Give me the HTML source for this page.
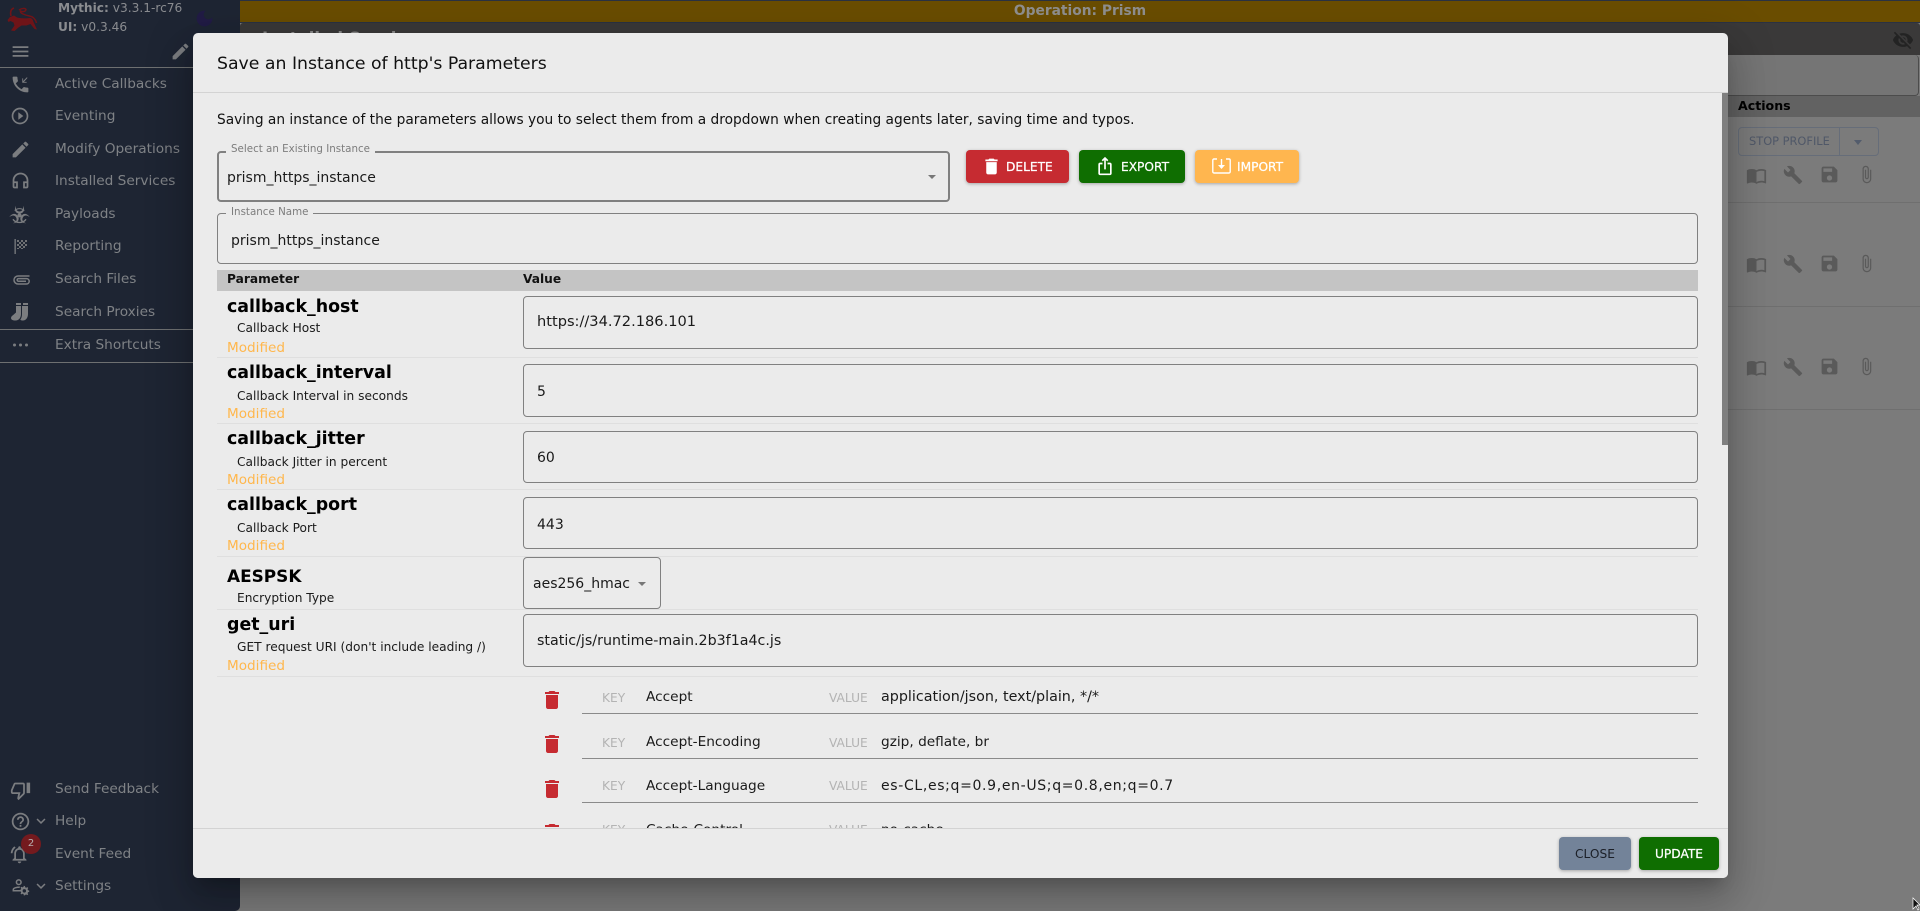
<!DOCTYPE html>
<html><head><meta charset="utf-8"><title>Mythic</title>
<style>
*{box-sizing:border-box}
html,body{margin:0;padding:0;width:1920px;height:911px;overflow:hidden;background:#7b7b7b;font-family:"DejaVu Sans","Liberation Sans",sans-serif}
.a{position:absolute;white-space:nowrap}
.t{position:absolute;white-space:nowrap;height:20px;line-height:20px}
svg{position:absolute;display:block}
#side{position:absolute;left:0;top:0;width:240px;height:911px;background:#1e2533;border-radius:0 0 5px 0}
.nav{position:absolute;left:55px;font-size:13.7px;color:#7f8286;height:20px;line-height:20px;white-space:nowrap}
.hr{position:absolute;left:0;width:240px;height:1px;background:#6e7071}
.i{fill:#7b7d80}
#modal{position:absolute;left:193px;top:33px;width:1535px;height:845px;background:#ebebeb;border-radius:5px;box-shadow:0 11px 15px -7px rgba(0,0,0,.2),0 24px 38px 3px rgba(0,0,0,.14),0 9px 46px 8px rgba(0,0,0,.12);overflow:hidden;color:#111}
.box{position:absolute;border:1px solid #808080;border-radius:4px}
.lbl{position:absolute;background:#ebebeb;padding:0 5px;font-size:10.3px;color:#7d7d7d;line-height:12px;height:12px}
.name{position:absolute;left:34px;font-size:17.4px;font-weight:700;color:#000;height:20px;line-height:20px;white-space:nowrap;transform:translateY(1px)}
.sub{position:absolute;left:44px;font-size:12.2px;color:#1a1a1a;height:16px;line-height:16px;white-space:nowrap;transform:translateY(1px)}
.mod{position:absolute;left:34px;font-size:13.6px;color:#ffb74d;height:20px;line-height:20px;white-space:nowrap;transform:translateY(1px)}
.sep{position:absolute;left:24px;width:1481px;height:1px;background:#dfdfdf}
.val{position:absolute;left:344px;font-size:14px;color:#1a1a1a;height:20px;line-height:20px;white-space:nowrap;transform:translateY(1px)}
.btn{position:absolute;height:33px;border-radius:4px;color:#fff;font-size:12.2px;line-height:34px;box-shadow:0 1px 3px rgba(0,0,0,.3);white-space:nowrap;-webkit-text-stroke:.25px currentColor}
.k{position:absolute;font-size:12.2px;color:#b3b3b3;height:18px;line-height:18px}
.kv{position:absolute;font-size:13.7px;color:#1a1a1a;height:20px;line-height:20px;white-space:nowrap;transform:translateY(1px)}
.ul{position:absolute;left:389px;width:1116px;height:1px;background:#8a8a8a}
.act{fill:#5a5a5a}
</style></head><body>

<!-- main background -->
<div class="a" style="left:240px;top:0;width:1680px;height:911px;background:#7b7b7b"></div>
<div class="a" style="left:240px;top:1px;width:1680px;height:21px;background:#6a4d00;color:#8f8f8f;font-size:13.8px;font-weight:700;text-align:center;line-height:21px">Operation: Prism</div>
<div class="a" style="left:240px;top:0;width:1680px;height:1px;background:#2a3242"></div>
<div class="a" style="left:240px;top:22px;width:1680px;height:1px;background:#2a3242"></div>
<div class="a" style="left:240px;top:23px;width:1680px;height:32px;background:#3a3939;border-radius:3px 3px 0 0"></div>
<div class="a" style="left:262px;top:29px;color:#8a8a8a;font-size:16.5px;font-weight:700">Installed Services</div>
<svg style="left:1892px;top:29px" width="22" height="22" viewBox="0 0 24 24" fill="#232323"><path d="M12 7c2.76 0 5 2.24 5 5 0 .65-.13 1.26-.36 1.83l2.92 2.92c1.51-1.26 2.7-2.89 3.43-4.75-1.73-4.39-6-7.5-11-7.5-1.4 0-2.74.25-3.98.7l2.16 2.16C10.74 7.13 11.35 7 12 7zM2 4.27l2.28 2.28.46.46C3.08 8.3 1.78 10.02 1 12c1.73 4.39 6 7.5 11 7.5 1.55 0 3.03-.3 4.38-.84l.42.42L19.73 22 21 20.73 3.27 3 2 4.27zM7.53 9.8l1.55 1.55c-.05.21-.08.43-.08.65 0 1.66 1.34 3 3 3 .22 0 .44-.03.65-.08l1.55 1.55c-.67.33-1.41.53-2.2.53-2.76 0-5-2.24-5-5 0-.79.2-1.53.53-2.2zm4.31-.78 3.15 3.15.02-.16c0-1.66-1.34-3-3-3l-.17.01z"/></svg>
<div class="a" style="left:1700px;top:55px;width:219px;height:41px;background:#757575;border:1px solid #4c4c4c;border-left:0;border-top-width:0;border-radius:0 4px 4px 0"></div>
<div class="a" style="left:1700px;top:96px;width:220px;height:21px;background:#626262"></div>
<div class="a" style="left:1738px;top:95px;height:21px;line-height:21px;font-size:12.6px;font-weight:700;color:#000">Actions</div>
<div class="a" style="left:1738px;top:127px;width:141px;height:29px;border:1px solid #666d79;border-radius:4px;color:#505868;font-size:11.4px;line-height:27px;padding-left:10px">STOP PROFILE</div>
<div class="a" style="left:1839px;top:127px;width:1px;height:29px;background:#666d79"></div>
<div class="a" style="left:1854px;top:140px;width:0;height:0;border-left:4.5px solid transparent;border-right:4.5px solid transparent;border-top:5px solid #535c6c"></div>
<div class="a" style="left:1728px;top:202px;width:192px;height:1px;background:#6f6f6f"></div>
<div class="a" style="left:1728px;top:306px;width:192px;height:1px;background:#6f6f6f"></div>
<div class="a" style="left:1728px;top:409px;width:192px;height:1px;background:#6f6f6f"></div>
<!-- action icons rows -->
<svg style="left:1746px;top:165px" width="21" height="21" viewBox="0 0 24 24" class="act"><path d="M21 5c-1.11-.35-2.33-.5-3.5-.5-1.95 0-4.05.4-5.5 1.5-1.45-1.1-3.55-1.5-5.5-1.5S2.45 4.9 1 6v14.65c0 .25.25.5.5.5.1 0 .15-.05.25-.05C3.1 20.45 5.05 20 6.5 20c1.95 0 4.05.4 5.5 1.5 1.35-.85 3.8-1.5 5.5-1.5 1.65 0 3.35.3 4.75 1.05.1.05.15.05.25.05.25 0 .5-.25.5-.5V6c-.6-.45-1.25-.75-2-1zm0 13.5c-1.1-.35-2.3-.5-3.5-.5-1.7 0-4.15.65-5.5 1.5V8c1.35-.85 3.8-1.5 5.5-1.5 1.2 0 2.4.15 3.5.5v11.5z"/></svg>
<svg style="left:1783px;top:165px" width="20" height="20" viewBox="0 0 24 24" class="act"><path d="M22.7 19l-9.1-9.1c.9-2.3.4-5-1.5-6.9-2-2-5-2.4-7.4-1.3L9 6 6 9 1.6 4.7C.4 7.1.9 10.1 2.9 12.1c1.9 1.9 4.6 2.4 6.9 1.5l9.1 9.1c.4.4 1 .4 1.4 0l2.3-2.3c.5-.4.5-1.1.1-1.4z"/></svg>
<svg style="left:1819px;top:164px" width="21" height="21" viewBox="0 0 24 24" class="act"><path d="M17 3H5c-1.11 0-2 .9-2 2v14c0 1.1.89 2 2 2h14c1.1 0 2-.9 2-2V7l-4-4zm-5 16c-1.66 0-3-1.34-3-3s1.34-3 3-3 3 1.34 3 3-1.34 3-3 3zm3-10H5V5h10v4z"/></svg>
<svg style="left:1857px;top:165px" width="19" height="19" viewBox="0 0 24 24" class="act"><path d="M16.5 6v11.5c0 2.21-1.79 4-4 4s-4-1.79-4-4V5c0-1.38 1.12-2.5 2.5-2.5s2.5 1.12 2.5 2.5v10.5c0 .55-.45 1-1 1s-1-.45-1-1V6H10v9.5c0 1.38 1.12 2.5 2.5 2.5s2.5-1.12 2.5-2.5V5c0-2.21-1.79-4-4-4S7 2.79 7 5v12.5c0 3.04 2.46 5.5 5.5 5.5s5.5-2.46 5.5-5.5V6h-1.5z"/></svg>
<svg style="left:1746px;top:254px" width="21" height="21" viewBox="0 0 24 24" class="act"><path d="M21 5c-1.11-.35-2.33-.5-3.5-.5-1.95 0-4.05.4-5.5 1.5-1.45-1.1-3.55-1.5-5.5-1.5S2.45 4.9 1 6v14.65c0 .25.25.5.5.5.1 0 .15-.05.25-.05C3.1 20.45 5.05 20 6.5 20c1.95 0 4.05.4 5.5 1.5 1.35-.85 3.8-1.5 5.5-1.5 1.65 0 3.35.3 4.75 1.05.1.05.15.05.25.05.25 0 .5-.25.5-.5V6c-.6-.45-1.25-.75-2-1zm0 13.5c-1.1-.35-2.3-.5-3.5-.5-1.7 0-4.15.65-5.5 1.5V8c1.35-.85 3.8-1.5 5.5-1.5 1.2 0 2.4.15 3.5.5v11.5z"/></svg>
<svg style="left:1783px;top:254px" width="20" height="20" viewBox="0 0 24 24" class="act"><path d="M22.7 19l-9.1-9.1c.9-2.3.4-5-1.5-6.9-2-2-5-2.4-7.4-1.3L9 6 6 9 1.6 4.7C.4 7.1.9 10.1 2.9 12.1c1.9 1.9 4.6 2.4 6.9 1.5l9.1 9.1c.4.4 1 .4 1.4 0l2.3-2.3c.5-.4.5-1.1.1-1.4z"/></svg>
<svg style="left:1819px;top:253px" width="21" height="21" viewBox="0 0 24 24" class="act"><path d="M17 3H5c-1.11 0-2 .9-2 2v14c0 1.1.89 2 2 2h14c1.1 0 2-.9 2-2V7l-4-4zm-5 16c-1.66 0-3-1.34-3-3s1.34-3 3-3 3 1.34 3 3-1.34 3-3 3zm3-10H5V5h10v4z"/></svg>
<svg style="left:1857px;top:254px" width="19" height="19" viewBox="0 0 24 24" class="act"><path d="M16.5 6v11.5c0 2.21-1.79 4-4 4s-4-1.79-4-4V5c0-1.38 1.12-2.5 2.5-2.5s2.5 1.12 2.5 2.5v10.5c0 .55-.45 1-1 1s-1-.45-1-1V6H10v9.5c0 1.38 1.12 2.5 2.5 2.5s2.5-1.12 2.5-2.5V5c0-2.21-1.79-4-4-4S7 2.79 7 5v12.5c0 3.04 2.46 5.5 5.5 5.5s5.5-2.46 5.5-5.5V6h-1.5z"/></svg>
<svg style="left:1746px;top:357px" width="21" height="21" viewBox="0 0 24 24" class="act"><path d="M21 5c-1.11-.35-2.33-.5-3.5-.5-1.95 0-4.05.4-5.5 1.5-1.45-1.1-3.55-1.5-5.5-1.5S2.45 4.9 1 6v14.65c0 .25.25.5.5.5.1 0 .15-.05.25-.05C3.1 20.45 5.05 20 6.5 20c1.95 0 4.05.4 5.5 1.5 1.35-.85 3.8-1.5 5.5-1.5 1.65 0 3.35.3 4.75 1.05.1.05.15.05.25.05.25 0 .5-.25.5-.5V6c-.6-.45-1.25-.75-2-1zm0 13.5c-1.1-.35-2.3-.5-3.5-.5-1.7 0-4.15.65-5.5 1.5V8c1.35-.85 3.8-1.5 5.5-1.5 1.2 0 2.4.15 3.5.5v11.5z"/></svg>
<svg style="left:1783px;top:357px" width="20" height="20" viewBox="0 0 24 24" class="act"><path d="M22.7 19l-9.1-9.1c.9-2.3.4-5-1.5-6.9-2-2-5-2.4-7.4-1.3L9 6 6 9 1.6 4.7C.4 7.1.9 10.1 2.9 12.1c1.9 1.9 4.6 2.4 6.9 1.5l9.1 9.1c.4.4 1 .4 1.4 0l2.3-2.3c.5-.4.5-1.1.1-1.4z"/></svg>
<svg style="left:1819px;top:356px" width="21" height="21" viewBox="0 0 24 24" class="act"><path d="M17 3H5c-1.11 0-2 .9-2 2v14c0 1.1.89 2 2 2h14c1.1 0 2-.9 2-2V7l-4-4zm-5 16c-1.66 0-3-1.34-3-3s1.34-3 3-3 3 1.34 3 3-1.34 3-3 3zm3-10H5V5h10v4z"/></svg>
<svg style="left:1857px;top:357px" width="19" height="19" viewBox="0 0 24 24" class="act"><path d="M16.5 6v11.5c0 2.21-1.79 4-4 4s-4-1.79-4-4V5c0-1.38 1.12-2.5 2.5-2.5s2.5 1.12 2.5 2.5v10.5c0 .55-.45 1-1 1s-1-.45-1-1V6H10v9.5c0 1.38 1.12 2.5 2.5 2.5s2.5-1.12 2.5-2.5V5c0-2.21-1.79-4-4-4S7 2.79 7 5v12.5c0 3.04 2.46 5.5 5.5 5.5s5.5-2.46 5.5-5.5V6h-1.5z"/></svg>
<svg style="left:1912px;top:897px" width="8" height="14" viewBox="0 0 8 14"><path d="M1 1v11l3-3 2 4 1-1-2-4h3z" fill="#111" stroke="#fff" stroke-width=".7"/></svg>

<!-- sidebar -->
<div id="side">
<svg style="left:6px;top:7px" width="33" height="26" viewBox="0 0 33 26" fill="none" stroke="#6f1418"><path d="M8 1C5 2 4 5 5 9" stroke-width="1.5"/><path d="M13 3c3-2 6-2 7-.5-.5 2.500-4 2.500-5.500 1.500-1 2 4 4 9 5 4 .8 6 3 7 7" stroke-width="1.500"/><path d="M4 10l4-1.500 3 2c4 1 9 1 13 .5 2 0 3 2 3.500 4l2.500 5.500 1 2-2.500-.5-4-5-4 1.500-5 0-3 2-4 3.500-3.500-.5 3.500-5-1-3-3-1.500-2 1-1-2z" fill="#6f1418" stroke="none"/></svg>
<div class="t" style="left:58px;top:-2px;font-size:12.2px;color:#8a8c90"><b>Mythic:</b> v3.3.1-rc76</div>
<div class="t" style="left:58px;top:17px;font-size:12.2px;color:#8a8c90"><b>UI:</b> v0.3.46</div>
<svg style="left:194px;top:8px" width="21" height="21" viewBox="0 0 24 24" fill="#211b45"><path d="M12 3c-4.970 0-9 4.030-9 9s4.030 9 9 9 9-4.030 9-9c0-.46-.04-.92-.1-1.360-.98 1.370-2.580 2.260-4.400 2.260-2.980 0-5.400-2.420-5.400-5.400 0-1.810.89-3.420 2.260-4.400-.44-.06-.9-.1-1.360-.1z"/></svg>
<svg style="left:10px;top:41px" width="21" height="21" viewBox="0 0 24 24" class="i"><path d="M3 18h18v-2H3v2zm0-5h18v-2H3v2zm0-7v2h18V6H3z"/></svg>
<svg style="left:170px;top:41px" width="21" height="21" viewBox="0 0 24 24" class="i"><path d="M3 17.25V21h3.75L17.81 9.94l-3.75-3.75L3 17.25zM20.71 7.04c.39-.39.39-1.02 0-1.41l-2.34-2.34a.9959.9959 0 0 0-1.41 0l-1.83 1.83 3.75 3.75 1.83-1.83z"/></svg>
<div class="hr" style="top:67px"></div>

<svg style="left:10px;top:74px" width="21" height="21" viewBox="0 0 24 24" class="i"><path d="M20 15.500c-1.250 0-2.450-.2-3.570-.57-.35-.11-.74-.03-1.020.24l-2.200 2.200c-2.830-1.440-5.150-3.750-6.590-6.590l2.200-2.210c.28-.26.36-.65.25-1C8.700 6.450 8.500 5.250 8.500 4c0-.55-.45-1-1-1H4c-.55 0-1 .45-1 1 0 9.390 7.610 17 17 17 .55 0 1-.45 1-1v-3.500c0-.55-.45-1-1-1zM20 4.400 19.300 3.700 15 8V5h-1v5h5V9h-3z"/></svg>
<div class="nav" style="top:74px">Active Callbacks</div>
<svg style="left:10px;top:106px" width="20" height="20" viewBox="0 0 24 24" class="i"><path d="M10 16.500l6-4.500-6-4.500v9zM12 2C6.480 2 2 6.480 2 12s4.480 10 10 10 10-4.480 10-10S17.520 2 12 2zm0 18c-4.410 0-8-3.590-8-8s3.590-8 8-8 8 3.590 8 8-3.590 8-8 8z"/></svg>
<div class="nav" style="top:106px">Eventing</div>
<svg style="left:10px;top:139px" width="21" height="21" viewBox="0 0 24 24" class="i"><path d="M3 17.250V21h3.750L17.810 9.940l-3.750-3.750L3 17.250zM20.710 7.040c.39-.39.39-1.020 0-1.410l-2.340-2.340a.9959.9959 0 0 0-1.410 0l-1.830 1.830 3.750 3.750 1.830-1.830z"/></svg>
<div class="nav" style="top:139px">Modify Operations</div>
<svg style="left:10px;top:170px" width="21" height="21" viewBox="0 0 24 24" class="i"><path d="M12 3a9 9 0 0 0-9 9v7c0 1.100.9 2 2 2h4v-8H5v-1c0-3.870 3.130-7 7-7s7 3.130 7 7v1h-4v8h4c1.100 0 2-.9 2-2v-7a9 9 0 0 0-9-9zM7 15v4H5v-4h2zm12 4h-2v-4h2v4z"/></svg>
<div class="nav" style="top:171px">Installed Services</div>
<svg style="left:9px;top:204px" width="21" height="21" viewBox="0 0 24 24" class="i"><circle cx="12" cy="13" r="2.300"/><g id="bz"><path d="M8 2C5.500 6 7 11 12 11c5 0 6.500-5 4-9 .8 4-1 6.500-4 6.500S7.200 6 8 2z"/></g><path d="M8 2C5.500 6 7 11 12 11c5 0 6.500-5 4-9 .8 4-1 6.500-4 6.500S7.200 6 8 2z" transform="rotate(120 12 13)"/><path d="M8 2C5.500 6 7 11 12 11c5 0 6.500-5 4-9 .8 4-1 6.500-4 6.500S7.200 6 8 2z" transform="rotate(240 12 13)"/><path d="M4.500 17.500a9.500 9.500 0 0 0 15 0" fill="none" stroke="#7b7d80" stroke-width="1.500"/><path d="M6.500 7.500a8 8 0 0 1 11 0" fill="none" stroke="#7b7d80" stroke-width="1.200"/></svg>
<div class="nav" style="top:204px">Payloads</div>
<svg style="left:14px;top:239px" width="14" height="15" viewBox="0 0 14 15" fill="#6f7174"><rect x=".5" y="0" width="1.300" height="15" fill="#7b7d80"/><path d="M3 1h2v2H3zM7 1h2v2H7zM11 1h2v2h-2zM5 3h2v2H5zM9 3h2v2H9zM3 5h2v2H3zM7 5h2v2H7zM11 5h2v2h-2zM5 7h2v2H5zM9 7h2v2H9zM3 9h2v1H3zM7 9h2v1H7z"/></svg>
<div class="nav" style="top:236px">Reporting</div>
<svg style="left:12px;top:274px" width="18" height="11" viewBox="0 0 18 11" fill="none" stroke="#7b7d80" stroke-width="1.500"><path d="M17.500 2H6a4 4 0 0 0 0 8h8.500a2.700 2.700 0 0 0 0-5.400H6.500a1.300 1.300 0 0 0 0 2.700H14"/></svg>
<div class="nav" style="top:269px">Search Files</div>
<svg style="left:10px;top:303px" width="18" height="18" viewBox="0 0 18 18" class="i"><path d="M6 0h5v2H6zM6 3h5v8c0 3.500-2 6.500-5.500 6.500C2.500 17.500 1 16.500 1 15c0-1 .8-2 2.500-3.200L6 9.500zM13 0h5v2h-5zM13 3h5v8c0 3.500-2 6.500-5 6.500-1.200 0-2-.3-2.700-.8 1-1.300 1.700-3 1.700-5.700V3z"/></svg>
<div class="nav" style="top:302px">Search Proxies</div>
<div class="hr" style="top:329px"></div>
<svg style="left:12px;top:340px" width="17" height="10" viewBox="0 0 17 10" fill="#7b7d80"><circle cx="2.500" cy="5" r="1.500"/><circle cx="8.500" cy="5" r="1.500"/><circle cx="14.500" cy="5" r="1.500"/></svg>
<div class="nav" style="top:335px">Extra Shortcuts</div>
<div class="hr" style="top:362px"></div>

<svg style="left:10px;top:780px" width="21" height="21" viewBox="0 0 24 24" class="i"><path d="M15 3H6c-.83 0-1.540.5-1.840 1.220l-3.020 7.050c-.09.23-.14.47-.14.730v2c0 1.100.9 2 2 2h6.310l-.95 4.570-.03.32c0 .41.17.79.44 1.060L9.830 23l6.590-6.590c.36-.36.58-.86.58-1.410V5c0-1.100-.9-2-2-2zm0 12l-4.340 4.340L12 14H3v-2l3-7h9v10zm4-12h4v12h-4z"/></svg>
<div class="nav" style="top:779px">Send Feedback</div>
<svg style="left:10px;top:811px" width="21" height="21" viewBox="0 0 24 24" class="i"><path d="M11 18h2v-2h-2v2zm1-16C6.480 2 2 6.480 2 12s4.480 10 10 10 10-4.480 10-10S17.520 2 12 2zm0 18c-4.410 0-8-3.590-8-8s3.590-8 8-8 8 3.590 8 8-3.590 8-8 8zm0-14c-2.210 0-4 1.790-4 4h2c0-1.100.9-2 2-2s2 .9 2 2c0 2-3 1.750-3 5h2c0-2.250 3-2.500 3-5 0-2.210-1.790-4-4-4z"/></svg>
<svg style="left:32px;top:812px" width="18" height="18" viewBox="0 0 24 24" class="i"><path d="M16.590 8.590L12 13.170 7.410 8.590 6 10l6 6 6-6z"/></svg>
<div class="nav" style="top:811px">Help</div>
<svg style="left:9px;top:844px" width="21" height="21" viewBox="0 0 24 24" class="i"><path d="M7.580 4.080 6.150 2.650C3.750 4.480 2.170 7.300 2.030 10.500h2c.15-2.650 1.510-4.970 3.550-6.420zm12.390 6.420h2c-.15-3.200-1.730-6.020-4.120-7.850l-1.420 1.430c2.020 1.450 3.390 3.770 3.540 6.420zM18 11c0-3.070-1.640-5.640-4.500-6.320V4c0-.83-.67-1.500-1.500-1.500s-1.500.67-1.500 1.500v.68C7.630 5.360 6 7.920 6 11v5l-2 2v1h16v-1l-2-2v-5zm-2 6H8v-6c0-2.480 1.510-4.500 4-4.500s4 2.020 4 4.500v6zm-4 5c.14 0 .27-.01.4-.04.65-.14 1.180-.58 1.440-1.180.1-.24.15-.5.15-.78h-4c.01 1.100.9 2 2.010 2z"/></svg>
<div class="a" style="left:21px;top:834px;width:20px;height:20px;border-radius:50%;background:#741a1e;color:#b8b0b0;font-size:10px;text-align:center;line-height:20px">2</div>
<div class="nav" style="top:844px">Event Feed</div>
<svg style="left:11px;top:876px" width="20" height="20" viewBox="0 0 24 24" class="i"><path d="M10 4a4 4 0 1 0 0 8 4 4 0 0 0 0-8zm0 2a2 2 0 1 1 0 4 2 2 0 0 1 0-4zM2 20v-2.500C2 15 6 13.500 10 13.500c.6 0 1.200 0 1.800.1-.4.600-.6 1.200-.7 1.900-.4 0-.7 0-1.100 0-3.500 0-6 1.200-6 2v.5h7.200c.2.700.5 1.400 1 2zM18 13l.4 1.600 1.300.5 1.400-.8 1.100 1.200-.8 1.400.4 1.200L23.500 19v1.500l-1.600.4-.5 1.300.8 1.300-1.100 1.100-1.400-.8-1.200.4L18 25h-1.500l-.4-1.700-1.300-.4-1.400.8-1.100-1.100.8-1.300-.5-1.300-1.600-.4V18l1.600-.4.5-1.300-.8-1.400 1.100-1.100 1.400.8 1.300-.5.400-1.600zm-.8 4a2.200 2.200 0 1 0 0 4.400 2.200 2.200 0 0 0 0-4.400z" transform="scale(.93)"/></svg>
<svg style="left:32px;top:877px" width="18" height="18" viewBox="0 0 24 24" class="i"><path d="M16.590 8.590L12 13.170 7.410 8.590 6 10l6 6 6-6z"/></svg>
<div class="nav" style="top:876px">Settings</div>
</div>

<!-- modal -->
<div id="modal">
<div class="t" style="left:24px;top:21px;font-size:17.3px;color:#111">Save an Instance of http's Parameters</div>
<div class="a" style="left:0;top:59px;width:1535px;height:1px;background:#d3d3d3"></div>
<div class="a" style="left:1529px;top:60px;width:6px;height:352px;background:#7f7f7f"></div>
<div class="t" style="left:24px;top:77px;font-size:13.75px;color:#111">Saving an instance of the parameters allows you to select them from a dropdown when creating agents later, saving time and typos.</div>

<div class="box" style="left:24px;top:118px;width:733px;height:51px;border-width:2px"></div>
<div class="lbl" style="left:33px;top:110px">Select an Existing Instance</div>
<div class="t" style="left:34px;top:135px;font-size:14px;color:#1a1a1a">prism_https_instance</div>
<div class="a" style="left:735px;top:142px;border-left:4.5px solid transparent;border-right:4.5px solid transparent;border-top:4.5px solid #777"></div>

<div class="btn" style="left:773px;top:117px;width:103px;background:#c62b31;padding-left:40px">DELETE</div>
<svg style="left:788px;top:123px" width="21" height="21" viewBox="0 0 24 24" fill="#fff"><path d="M6 19c0 1.100.9 2 2 2h8c1.100 0 2-.9 2-2V7H6v12zM19 4h-3.500l-1-1h-5l-1 1H5v2h14V4z"/></svg>
<div class="btn" style="left:886px;top:117px;width:106px;background:#0f6e01;padding-left:42px">EXPORT</div>
<svg style="left:902px;top:123px" width="20" height="20" viewBox="0 0 24 24" fill="#fff"><path d="M16 5l-1.420 1.420-1.590-1.590V16h-1.980V4.830L9.420 6.420 8 5l4-4 4 4zm4 5v11c0 1.100-.9 2-2 2H6c-1.110 0-2-.9-2-2V10c0-1.110.89-2 2-2h3v2H6v11h12V10h-3V8h3c1.100 0 2 .89 2 2z"/></svg>
<div class="btn" style="left:1002px;top:117px;width:104px;background:#ffb64f;padding-left:42px">IMPORT</div>
<svg style="left:1019px;top:125px" width="19" height="16" viewBox="0 0 19 16" fill="none" stroke="#fff" stroke-width="1.400"><path d="M5 1H2a1.200 1.200 0 0 0-1.200 1.200v11.600A1.200 1.200 0 0 0 2 15h15a1.200 1.200 0 0 0 1.200-1.200V2.200A1.200 1.200 0 0 0 17 1h-3"/><path d="M9.500 1v7"/><path d="M6 7h7l-3.500 4z" fill="#fff" stroke="none"/></svg>

<div class="box" style="left:24px;top:180px;width:1481px;height:51px"></div>
<div class="lbl" style="left:33px;top:173px">Instance Name</div>
<div class="t" style="left:38px;top:198px;font-size:14px;color:#1a1a1a">prism_https_instance</div>

<div class="a" style="left:24px;top:237px;width:1481px;height:21px;background:#c4c4c4"></div>
<div class="a" style="left:34px;top:236px;height:21px;line-height:21px;font-size:12.2px;font-weight:700;color:#111">Parameter</div>
<div class="a" style="left:330px;top:236px;height:21px;line-height:21px;font-size:12.2px;font-weight:700;color:#111">Value</div>

<div class="name" style="top:263px">callback_host</div>
<div class="sub" style="top:286px">Callback Host</div>
<div class="mod" style="top:304px">Modified</div>
<div class="sep" style="top:324px"></div>
<div class="box" style="left:330px;top:263px;width:1175px;height:53px"></div>
<div class="val" style="top:278px;font-size:14.6px">https://34.72.186.101</div>

<div class="name" style="top:329px">callback_interval</div>
<div class="sub" style="top:354px">Callback Interval in seconds</div>
<div class="mod" style="top:370px">Modified</div>
<div class="sep" style="top:390px"></div>
<div class="box" style="left:330px;top:331px;width:1175px;height:53px"></div>
<div class="val" style="top:348px">5</div>

<div class="name" style="top:395px">callback_jitter</div>
<div class="sub" style="top:420px">Callback Jitter in percent</div>
<div class="mod" style="top:436px">Modified</div>
<div class="sep" style="top:456px"></div>
<div class="box" style="left:330px;top:398px;width:1175px;height:52px"></div>
<div class="val" style="top:414px">60</div>

<div class="name" style="top:461px">callback_port</div>
<div class="sub" style="top:486px">Callback Port</div>
<div class="mod" style="top:502px">Modified</div>
<div class="sep" style="top:523px"></div>
<div class="box" style="left:330px;top:464px;width:1175px;height:52px"></div>
<div class="val" style="top:481px">443</div>

<div class="name" style="top:532px;font-size:16.9px">AESPSK</div>
<div class="sub" style="top:556px">Encryption Type</div>
<div class="sep" style="top:576px"></div>
<div class="box" style="left:330px;top:524px;width:138px;height:52px"></div>
<div class="val" style="left:340px;top:540px">aes256_hmac</div>
<div class="a" style="left:445px;top:549px;border-left:4.5px solid transparent;border-right:4.5px solid transparent;border-top:4.5px solid #777"></div>

<div class="name" style="top:581px">get_uri</div>
<div class="sub" style="top:605px">GET request URI (don't include leading /)</div>
<div class="mod" style="top:622px">Modified</div>
<div class="sep" style="top:643px"></div>
<div class="box" style="left:330px;top:581px;width:1175px;height:53px"></div>
<div class="val" style="top:597px;font-size:14.25px">static/js/runtime-main.2b3f1a4c.js</div>

<svg style="left:347px;top:655px" width="24" height="24" viewBox="0 0 24 24" fill="#c62b31"><path d="M6 19c0 1.100.9 2 2 2h8c1.100 0 2-.9 2-2V7H6v12zM19 4h-3.500l-1-1h-5l-1 1H5v2h14V4z"/></svg>
<div class="k" style="left:409px;top:656px">KEY</div>
<div class="kv" style="left:453px;top:653px">Accept</div>
<div class="k" style="left:636px;top:656px">VALUE</div>
<div class="kv" style="left:688px;top:653px;font-size:14.3px">application/json, text/plain, */*</div>
<div class="ul" style="top:680px"></div>

<svg style="left:347px;top:699px" width="24" height="24" viewBox="0 0 24 24" fill="#c62b31"><path d="M6 19c0 1.100.9 2 2 2h8c1.100 0 2-.9 2-2V7H6v12zM19 4h-3.500l-1-1h-5l-1 1H5v2h14V4z"/></svg>
<div class="k" style="left:409px;top:701px">KEY</div>
<div class="kv" style="left:453px;top:698px">Accept-Encoding</div>
<div class="k" style="left:636px;top:701px">VALUE</div>
<div class="kv" style="left:688px;top:698px">gzip, deflate, br</div>
<div class="ul" style="top:725px"></div>

<svg style="left:347px;top:744px" width="24" height="24" viewBox="0 0 24 24" fill="#c62b31"><path d="M6 19c0 1.100.9 2 2 2h8c1.100 0 2-.9 2-2V7H6v12zM19 4h-3.500l-1-1h-5l-1 1H5v2h14V4z"/></svg>
<div class="k" style="left:409px;top:744px">KEY</div>
<div class="kv" style="left:453px;top:742px">Accept-Language</div>
<div class="k" style="left:636px;top:744px">VALUE</div>
<div class="kv" style="left:688px;top:742px;font-size:14px;letter-spacing:.66px">es-CL,es;q=0.9,en-US;q=0.8,en;q=0.7</div>
<div class="ul" style="top:769px"></div>

<svg style="left:347px;top:788px" width="24" height="24" viewBox="0 0 24 24" fill="#c62b31"><path d="M6 19c0 1.100.9 2 2 2h8c1.100 0 2-.9 2-2V7H6v12zM19 4h-3.500l-1-1h-5l-1 1H5v2h14V4z"/></svg>
<div class="k" style="left:409px;top:788px">KEY</div>
<div class="kv" style="left:453px;top:786px">Cache-Control</div>
<div class="k" style="left:636px;top:788px">VALUE</div>
<div class="kv" style="left:688px;top:786px">no-cache</div>

<div class="a" style="left:0;top:795px;width:1535px;height:50px;background:#ebebeb;border-top:1px solid #d3d3d3"></div>
<div class="btn" style="left:1366px;top:804px;width:72px;background:#738399;color:#1b1f27;text-align:center;-webkit-text-stroke:0">CLOSE</div>
<div class="btn" style="left:1446px;top:804px;width:80px;background:#0f6e01;text-align:center">UPDATE</div>
</div>
</body></html>
